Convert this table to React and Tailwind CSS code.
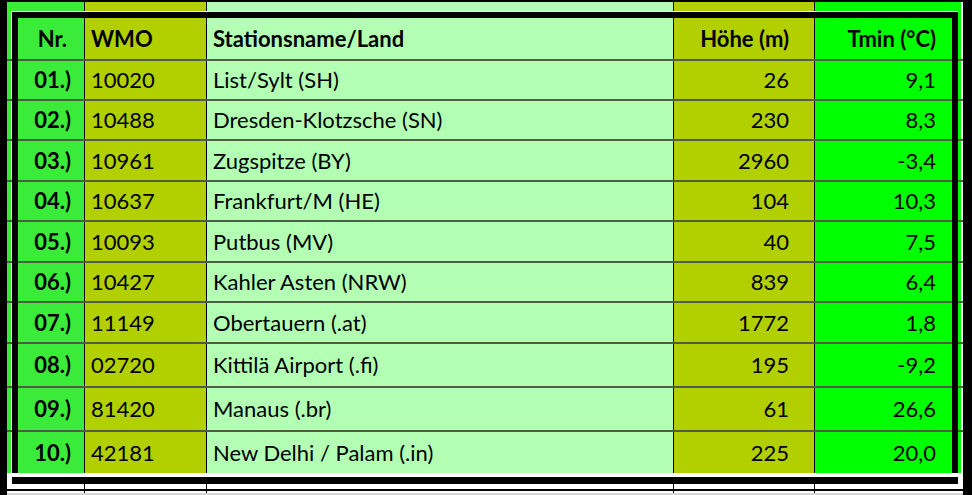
import React from 'react';

const cols = [
    { w: 'w-[67px]', bg: 'bg-[#3aeb3a]', div: 'border-r border-black', cell: 'justify-end pr-[13px] font-bold', head: 'justify-end pr-[17px]' },
    { w: 'w-[122px]', bg: 'bg-[#b2d000]', div: 'border-r border-black', cell: 'pl-[6px]', head: 'pl-[6px]' },
    { w: 'w-[467px]', bg: 'bg-[#b3ffb3]', div: 'border-r border-black', cell: 'pl-[6px]', head: 'pl-[6px]' },
    { w: 'w-[141px]', bg: 'bg-[#b2d000]', div: 'border-r border-black', cell: 'justify-end pr-[25px]', head: 'justify-end pr-[25px]' },
    { w: 'w-[137px]', bg: 'bg-[#00ff00]', div: '', cell: 'justify-end pr-[16px]', head: 'justify-end pr-[16px]' },
];

const header = ['Nr.', 'WMO', 'Stationsname/Land', 'Höhe (m)', 'Tmin (°C)'];

const rows = [
    { h: 'h-[38px]', cells: ['01.)', '10020', 'List/Sylt (SH)', '26', '9,1'] },
    { h: 'h-[38px]', cells: ['02.)', '10488', 'Dresden-Klotzsche (SN)', '230', '8,3'] },
    { h: 'h-[39px]', cells: ['03.)', '10961', 'Zugspitze (BY)', '2960', '-3,4'] },
    { h: 'h-[38px]', cells: ['04.)', '10637', 'Frankfurt/M (HE)', '104', '10,3'] },
    { h: 'h-[39px]', cells: ['05.)', '10093', 'Putbus (MV)', '40', '7,5'] },
    { h: 'h-[38px]', cells: ['06.)', '10427', 'Kahler Asten (NRW)', '839', '6,4'] },
    { h: 'h-[39px]', cells: ['07.)', '11149', 'Obertauern (.at)', '1772', '1,8'] },
    { h: 'h-[42px]', cells: ['08.)', '02720', 'Kittilä Airport (.fi)', '195', '-9,2'] },
    { h: 'h-[42px]', cells: ['09.)', '81420', 'Manaus (.br)', '61', '26,6'] },
    { h: 'h-[45px] pb-[4px]', cells: ['10.)', '42181', 'New Delhi / Palam (.in)', '225', '20,0'], last: true },
];

// left / right edges of a table row: margin strip, white hairline, thick frame
const LeftEdge = () => (
    <div className="flex shrink-0">
        <div className="w-[4px] bg-[#3aeb3a]" />
        <div className="w-[1px] bg-white" />
        <div className="w-[6px] bg-black" />
    </div>
);

const RightEdge = () => (
    <div className="flex shrink-0">
        <div className="w-[6px] bg-black" />
        <div className="w-[3px] bg-[#00ff00]" />
        <div className="w-[2px] bg-white" />
    </div>
);

const RowLine = () => (
    <div className="flex h-[2px]">
        <div className="w-[5px] bg-[#4e5e44]" />
        <div className="w-[6px] bg-black" />
        <div className="flex-1 bg-[#4e5e44]" />
        <div className="w-[6px] bg-black" />
        <div className="w-[5px] bg-[#4e5e44]" />
    </div>
);

const TableRow = ({ h, cells, bold = false, head = false, last = false }) => (
    <div className="flex flex-col">
        <div className={`flex ${h}`}>
            <LeftEdge />
            {cols.map((c, i) => (
                <div
                    key={i}
                    className={`${c.w} ${c.bg} ${c.div} flex items-center ${head ? c.head : c.cell} ${bold ? 'font-bold' : ''}`}
                >
                    {cells[i]}
                </div>
            ))}
            <RightEdge />
        </div>
        {!last && <RowLine />}
    </div>
);

const ColumnStrip = ({ h, white = false }) => (
    <div className={`flex ${h}`}>
        {cols.map((c, i) => (
            <div key={i} className={`${c.w} ${white ? 'bg-white' : c.bg} ${c.div}`} />
        ))}
    </div>
);

const App = () => {
    return (
        <div className="flex w-[972px] h-[495px] bg-white overflow-hidden font-['Lato',sans-serif] text-[22px] leading-none text-black">
            <div className="w-[7px] bg-black shrink-0" />

            <div className="flex flex-col w-[956px]">
                {/* top outer line */}
                <div className="h-[2px] bg-black" />

                {/* cell fills above the frame */}
                <div className="flex h-[9px]">
                    <div className="w-[11px] bg-[#3aeb3a]" />
                    <ColumnStrip h="h-[9px]" />
                    <div className="w-[9px] bg-[#00ff00]" />
                    <div className="w-[2px] bg-white" />
                </div>

                {/* white hairline */}
                <div className="flex h-[1px]">
                    <div className="w-[4px] bg-[#3aeb3a]" />
                    <div className="flex-1 bg-white" />
                    <div className="w-[3px] bg-[#00ff00]" />
                    <div className="w-[2px] bg-white" />
                </div>

                {/* top of thick frame */}
                <div className="flex h-[6px]">
                    <div className="w-[4px] bg-[#3aeb3a]" />
                    <div className="w-[1px] bg-white" />
                    <div className="flex-1 bg-black" />
                    <div className="w-[3px] bg-[#00ff00]" />
                    <div className="w-[2px] bg-white" />
                </div>

                <TableRow h="h-[41px]" cells={header} bold head />
                {rows.map((r, i) => (
                    <TableRow key={i} h={r.h} cells={r.cells} last={r.last} />
                ))}

                {/* bottom of thick frame */}
                <div className="flex h-[7px]">
                    <div className="w-[5px] bg-white" />
                    <div className="flex-1 bg-black" />
                    <div className="w-[5px] bg-white" />
                </div>

                {/* below the table */}
                <div className="flex h-[5px]">
                    <div className="w-[11px] bg-white" />
                    <ColumnStrip h="h-[5px]" white />
                    <div className="w-[11px] bg-white" />
                </div>
                <div className="h-[2px] bg-black" />
                <div className="flex h-[2px]">
                    <div className="w-[11px] bg-white" />
                    <ColumnStrip h="h-[2px]" white />
                    <div className="w-[11px] bg-white" />
                </div>
                <div className="h-[2px] bg-[#d4d4d4]" />
            </div>

            <div className="w-[9px] bg-black shrink-0" />
        </div>
    );
};

export default App;
